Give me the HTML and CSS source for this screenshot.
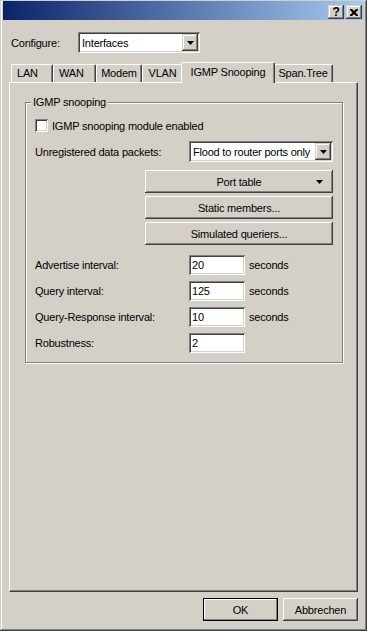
FILE: index.html
```html
<!DOCTYPE html>
<html lang="de">
<head>
    <meta charset="UTF-8">
    <meta name="viewport" content="width=device-width, initial-scale=1.0">
    <title>IGMP Snooping</title>
    <link rel="stylesheet" href="styles.css">
</head>
<body>

<div class="window">
    <div class="titlebar">
        <span class="cap-btn cap-help">?</span>
        <span class="cap-btn">
            <svg width="8" height="7" viewBox="0 0 8 7"><path d="M0 0h2l2 2 2-2h2v1L5.5 3.5 8 6v1H6L4 5 2 7H0V6l2.5-2.5L0 1z" fill="#000"/></svg>
        </span>
    </div>

    <div class="client">
        <div class="configure-row">
            <label class="configure-label">Configure:</label>
            <div class="combo combo-configure">
                <span class="combo-text">Interfaces</span>
                <span class="combo-arrow"><svg width="7" height="4" viewBox="0 0 7 4"><path d="M0 0h7L3.5 4z" fill="#000"/></svg></span>
            </div>
        </div>

        <div class="tabs">
            <div class="tab tab-left tab-lan">LAN</div>
            <div class="tab tab-left tab-wan">WAN</div>
            <div class="tab tab-modem">Modem</div>
            <div class="tab tab-vlan">VLAN</div>
            <div class="tab tab-igmp active">IGMP Snooping</div>
            <div class="tab tab-span">Span.Tree</div>
        </div>

        <div class="panel">
            <fieldset class="group">
                <legend>IGMP snooping</legend>

                <div class="check-row">
                    <span class="checkbox"></span>
                    <span>IGMP snooping module enabled</span>
                </div>

                <div class="field-row field-combo">
                    <span class="field-label">Unregistered data packets:</span>
                    <div class="combo combo-packets">
                        <span class="combo-text">Flood to router ports only</span>
                        <span class="combo-arrow"><svg width="7" height="4" viewBox="0 0 7 4"><path d="M0 0h7L3.5 4z" fill="#000"/></svg></span>
                    </div>
                </div>

                <div class="side-buttons">
                    <button class="btn btn-wide">Port table
                        <svg class="menu-arrow" width="7" height="4" viewBox="0 0 7 4"><path d="M0 0h7L3.5 4z" fill="#000"/></svg>
                    </button>
                    <button class="btn btn-wide">Static members...</button>
                    <button class="btn btn-wide">Simulated queriers...</button>
                </div>

                <div class="interval-rows">
                    <div class="field-row">
                        <span class="field-label">Advertise interval:</span>
                        <input class="text-input" type="text" value="20">
                        <span class="unit">seconds</span>
                    </div>
                    <div class="field-row">
                        <span class="field-label">Query interval:</span>
                        <input class="text-input" type="text" value="125">
                        <span class="unit">seconds</span>
                    </div>
                    <div class="field-row">
                        <span class="field-label">Query-Response interval:</span>
                        <input class="text-input" type="text" value="10">
                        <span class="unit">seconds</span>
                    </div>
                    <div class="field-row">
                        <span class="field-label">Robustness:</span>
                        <input class="text-input" type="text" value="2">
                    </div>
                </div>
            </fieldset>
        </div>

        <div class="dialog-buttons">
            <button class="btn btn-dialog btn-default">OK</button>
            <button class="btn btn-dialog">Abbrechen</button>
        </div>
    </div>
</div>

</body>
</html>
```

FILE: styles.css
```css
body {
    margin: 0;
    font-family: "Liberation Sans", Arial, sans-serif;
    font-size: 11px;
    letter-spacing: -0.2px;
    color: #000;
    background: #d4d0c8;
}
.window {
    width: 367px;
    height: 631px;
    box-sizing: border-box;
    padding: 1px 3px 3px 3px;
    background: #d4d0c8;
    box-shadow: inset -1px -1px 0 #404040, inset 1px 1px 0 #d4d0c8,
                inset -2px -2px 0 #808080, inset 2px 2px 0 #fff;
    display: flex;
    flex-direction: column;
}
.titlebar {
    height: 19px;
    box-sizing: border-box;
    padding: 4px 2px 0 0;
    background: linear-gradient(to right, #0a246a, #a6caf0);
    display: flex;
    justify-content: flex-end;
    align-items: flex-start;
    gap: 2px;
}
.cap-btn {
    width: 16px;
    height: 14px;
    background: #d4d0c8;
    box-shadow: inset -1px -1px 0 #404040, inset 1px 1px 0 #d4d0c8,
                inset -2px -2px 0 #808080, inset 2px 2px 0 #fff;
    display: flex;
    align-items: center;
    justify-content: center;
}
.cap-help {
    font-weight: bold;
    font-size: 12px;
    line-height: 14px;
}
.client {
    flex: 1;
    padding: 0 6px;
}
.configure-row {
    display: flex;
    align-items: center;
    margin-top: 12px;
    padding-left: 2px;
    height: 21px;
}
.configure-label {
    width: 67px;
}

/* combo box */
.combo {
    height: 21px;
    box-sizing: border-box;
    padding: 2px;
    background: #fff;
    box-shadow: inset 1px 1px 0 #808080, inset -1px -1px 0 #fff,
                inset 2px 2px 0 #404040, inset -2px -2px 0 #d4d0c8;
    display: flex;
    align-items: center;
}
.combo-configure {
    width: 122px;
}
.combo-packets {
    width: 144px;
}
.combo-text {
    flex: 1;
    padding-left: 2px;
    white-space: nowrap;
    overflow: hidden;
}
.combo-arrow {
    width: 16px;
    height: 17px;
    flex-shrink: 0;
    background: #d4d0c8;
    box-shadow: inset -1px -1px 0 #404040, inset 1px 1px 0 #d4d0c8,
                inset -2px -2px 0 #808080, inset 2px 2px 0 #fff;
    display: flex;
    align-items: center;
    justify-content: center;
}

/* tabs */
.tabs {
    display: flex;
    align-items: flex-end;
    margin-top: 9px;
    padding-left: 2px;
    height: 20px;
}
.tab {
    height: 18px;
    box-sizing: border-box;
    padding-top: 1px;
    line-height: 14px;
    text-align: center;
    border-top: 1px solid #fff;
    border-left: 1px solid #fff;
    border-right: 1px solid #404040;
    border-radius: 2px 2px 0 0;
    box-shadow: inset -1px 0 0 #808080;
    white-space: nowrap;
}
.tab-left {
    text-align: left;
    padding-left: 5px;
}
.tab-lan { width: 42px; }
.tab-wan { width: 43px; }
.tab-modem { width: 46px; }
.tab-vlan { width: 41px; }
.tab-igmp { width: 90px; }
.tab-span { width: 60px; }
.tab.active {
    width: 94px;
    height: 21px;
    margin: 0 -2px -1px -2px;
    padding-top: 2px;
    position: relative;
    z-index: 1;
    background: #d4d0c8;
}

.panel {
    height: 510px;
    box-sizing: border-box;
    border: 1px solid;
    border-color: #fff #404040 #404040 #fff;
    box-shadow: inset -1px -1px 0 #808080;
    padding: 0 15px;
}

/* group box */
.group {
    width: 318px;
    box-sizing: border-box;
    margin: 13px 0 0 0;
    padding: 10px 9px 9px 9px;
    border: 1px solid #808080;
    box-shadow: 1px 1px 0 #fff, inset 1px 1px 0 #fff;
    min-width: 0;
}
.group legend {
    margin-left: -4px;
    padding: 0 2px;
    line-height: 13px;
    background: #d4d0c8;
}
.check-row {
    display: flex;
    align-items: center;
    height: 13px;
    gap: 4px;
}
.checkbox {
    width: 13px;
    height: 13px;
    box-sizing: border-box;
    background: #fff;
    box-shadow: inset 1px 1px 0 #808080, inset -1px -1px 0 #fff,
                inset 2px 2px 0 #404040, inset -2px -2px 0 #d4d0c8;
}
.field-row {
    display: flex;
    align-items: center;
    height: 20px;
}
.field-combo {
    height: 21px;
    margin-top: 9px;
}
.field-label {
    width: 154px;
    white-space: nowrap;
}

/* buttons */
.btn {
    padding: 0;
    border: none;
    margin: 0;
    font-family: inherit;
    font-size: 11px;
    letter-spacing: inherit;
    color: #000;
    background: #d4d0c8;
    box-shadow: inset -1px -1px 0 #404040, inset 1px 1px 0 #fff,
                inset -2px -2px 0 #808080, inset 2px 2px 0 #d4d0c8;
}
.side-buttons {
    display: flex;
    flex-direction: column;
    gap: 3px;
    margin: 8px 0 0 110px;
}
.btn-wide {
    position: relative;
    width: 188px;
    height: 23px;
}
.menu-arrow {
    position: absolute;
    right: 10px;
    top: 10px;
}
.interval-rows {
    display: flex;
    flex-direction: column;
    gap: 6px;
    margin-top: 10px;
}
.text-input {
    width: 56px;
    height: 20px;
    box-sizing: border-box;
    margin: 0;
    border: none;
    padding: 0 3px;
    font-family: inherit;
    font-size: 11px;
    letter-spacing: inherit;
    color: #000;
    background: #fff;
    box-shadow: inset 1px 1px 0 #808080, inset -1px -1px 0 #fff,
                inset 2px 2px 0 #404040, inset -2px -2px 0 #d4d0c8;
    outline: none;
}
.unit {
    margin-left: 4px;
}

.dialog-buttons {
    display: flex;
    justify-content: flex-end;
    gap: 5px;
    margin-top: 6px;
}
.btn-dialog {
    width: 75px;
    height: 23px;
}
.btn-default {
    box-shadow: inset 0 0 0 1px #000, inset -2px -2px 0 #808080, inset 2px 2px 0 #fff;
}
```
